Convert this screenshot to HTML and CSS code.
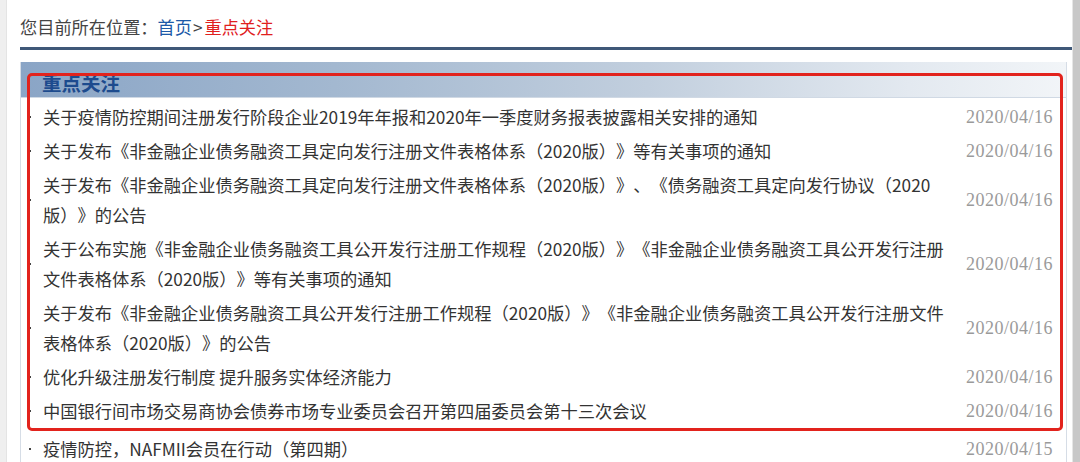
FILE: index.html
```html
<!DOCTYPE html>
<html lang="zh-CN">
<head>
<meta charset="utf-8">
<title>重点关注</title>
<link rel="stylesheet" href="styles.css">
</head>
<body>
<div class="page">
  <div class="strip"></div>
  <div class="main">
    <div class="crumb">您目前所在位置：<a class="home" href="#">首页</a><span class="sep">&gt;</span><span class="cur">重点关注</span></div>
    <div class="panel">
      <div class="panel-head">重点关注</div>
      <ul class="list">
        <li><span class="dot"></span><span class="title">关于疫情防控期间注册发行阶段企业2019年年报和2020年一季度财务报表披露相关安排的通知</span><span class="date">2020/04/16</span></li>
        <li><span class="dot"></span><span class="title">关于发布《非金融企业债务融资工具定向发行注册文件表格体系（2020版）》等有关事项的通知</span><span class="date">2020/04/16</span></li>
        <li><span class="dot"></span><span class="title">关于发布《非金融企业债务融资工具定向发行注册文件表格体系（2020版）》、《债务融资工具定向发行协议（2020版）》的公告</span><span class="date">2020/04/16</span></li>
        <li><span class="dot"></span><span class="title">关于公布实施《非金融企业债务融资工具公开发行注册工作规程（2020版）》《非金融企业债务融资工具公开发行注册文件表格体系（2020版）》等有关事项的通知</span><span class="date">2020/04/16</span></li>
        <li><span class="dot"></span><span class="title">关于发布《非金融企业债务融资工具公开发行注册工作规程（2020版）》《非金融企业债务融资工具公开发行注册文件表格体系（2020版）》的公告</span><span class="date">2020/04/16</span></li>
        <li><span class="dot"></span><span class="title">优化升级注册发行制度 提升服务实体经济能力</span><span class="date">2020/04/16</span></li>
        <li><span class="dot"></span><span class="title">中国银行间市场交易商协会债券市场专业委员会召开第四届委员会第十三次会议</span><span class="date">2020/04/16</span></li>
        <li class="after"><span class="dot"></span><span class="title">疫情防控，NAFMII会员在行动（第四期）</span><span class="date">2020/04/15</span></li>
      </ul>
      <div class="highlight"></div>
    </div>
  </div>
  <div class="scrollbar"></div>
</div>
</body>
</html>
```
FILE: styles.css
```css
html, body {
  margin: 0;
  padding: 0;
  background: #ffffff;
  height: 100%;
  overflow: hidden;
}
body {
  font-family: "Noto Sans CJK SC", "Noto Sans", sans-serif;
  color: #333333;
  text-spacing-trim: space-all;
}
.page {
  display: flex;
  height: 462px;
}
.strip {
  width: 6px;
  flex: none;
  background: #efefef;
  border-right: 1px solid #e4e4e4;
}
.main {
  flex: 1;
  padding-left: 13px;
  min-width: 0;
}
.scrollbar {
  width: 7px;
  flex: none;
  background: #c8c8c8;
  border-left: 1px solid #e6e6e6;
}
.crumb {
  font-size: 17.2px;
  line-height: 26px;
  padding-top: 14px;
  padding-bottom: 7px;
  border-bottom: 3px solid #3f5878;
  color: #444;
  white-space: nowrap;
}
.home {
  color: #1d5aa8;
  text-decoration: none;
}
.sep {
  color: #444;
  padding: 0 2px 0 1px;
}
.cur {
  color: #e0201e;
}
.panel {
  position: relative;
  margin-top: 12px;
  margin-right: 5px;
  border: 1px solid #d6dde6;
  border-top: none;
}
.panel-head {
  height: 35px;
  line-height: 41px;
  padding-left: 21px;
  font-size: 19.5px;
  font-weight: bold;
  color: #1d4b8e;
  background: linear-gradient(to right, #8aa5c6 0%, #a3b8d0 30%, #c2cfde 60%, #e3e9f0 85%, #f2f5f8 100%);
  border-bottom: 1px solid #d0d9e4;
}
.list {
  list-style: none;
  margin: 0;
  padding: 2px 0 0;
}
.list li {
  display: flex;
  align-items: center;
  padding: 2px 13px 2px 8px;
  min-height: 30px;
  font-size: 17.25px;
  line-height: 30px;
}
.list li.after {
  padding-top: 6px;
}
.dot {
  width: 2px;
  height: 2px;
  background: #444;
  flex: none;
  margin-right: 12px;
}
.title {
  flex: 1;
  min-width: 0;
  color: #333;
}
.date {
  flex: none;
  margin-left: 20px;
  font-family: "Liberation Serif", "Times New Roman", serif;
  font-size: 18px;
  letter-spacing: 0.5px;
  color: #9a9a9a;
}
.highlight {
  position: absolute;
  left: 6px;
  top: 11px;
  width: 1030px;
  height: 352px;
  border: 3px solid #e2231d;
  border-radius: 5px;
  pointer-events: none;
}
```
